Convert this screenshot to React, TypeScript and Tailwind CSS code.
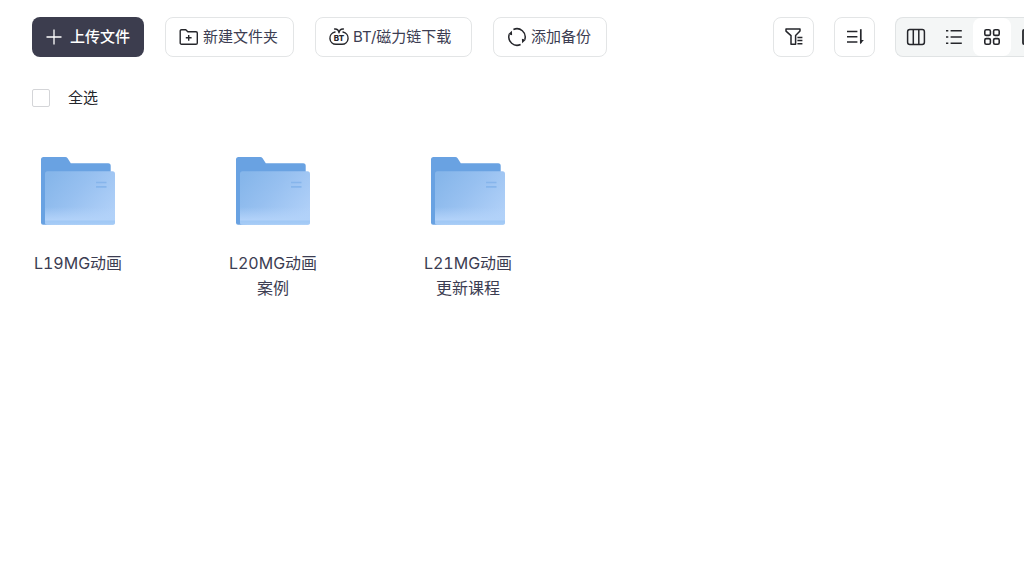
import React from 'react';

const folders = [
  { id: 'l19', name: 'L19MG动画' },
  { id: 'l20', name: 'L20MG动画案例' },
  { id: 'l21', name: 'L21MG动画更新课程' }
];

const PlusIcon = () => (
  <svg width="16" height="16" viewBox="0 0 16 16" fill="none" stroke="currentColor" strokeWidth="1.3" aria-hidden="true">
    <path d="M8 0.5v15M0.5 8h15" />
  </svg>
);

const NewFolderIcon = () => (
  <svg width="20" height="20" viewBox="0 0 20 20" fill="none" stroke="#25262b" strokeWidth="1.4" strokeLinejoin="round" aria-hidden="true">
    <path d="M1.2 4a1.3 1.3 0 0 1 1.3-1.3h4.3l2 2.1h8.2a1.3 1.3 0 0 1 1.3 1.3v9.8a1.3 1.3 0 0 1-1.3 1.3H2.5a1.3 1.3 0 0 1-1.3-1.3z" />
    <path d="M9.7 7.9v5.8M6.8 10.8h5.8" />
  </svg>
);

const BtIcon = () => (
  <svg width="20" height="20" viewBox="0 0 20 20" fill="none" stroke="#25262b" strokeWidth="1.4" strokeLinecap="round" strokeLinejoin="round" aria-hidden="true">
    <path d="M6 5A6.2 6.2 0 0 0 7 17.3h6A6.2 6.2 0 0 0 14 5" />
    <path d="M5.6 2c2.4-.2 3.9.8 4.4 3.7.5-2.9 2-3.9 4.4-3.7" />
    <text x="10" y="14" textAnchor="middle" fontFamily="Inter, sans-serif" fontSize="8" fontWeight="800" fill="#25262b" stroke="none">BT</text>
  </svg>
);

const BackupIcon = () => (
  <svg width="20" height="20" viewBox="0 0 20 20" fill="none" stroke="#25262b" strokeWidth="1.5" aria-hidden="true">
    <path d="M6.4 2.5a8.3 8.3 0 0 1 11.4 10" />
    <path d="M13.6 17.5a8.3 8.3 0 0 1-11.4-10" />
    <path d="M4.9 3.7l.2 4.5-3.9-.9z" fill="#25262b" stroke="none" />
    <path d="M15.1 16.3l-.2-4.5 3.9.9z" fill="#25262b" stroke="none" />
  </svg>
);

const FilterIcon = () => (
  <svg width="20" height="20" viewBox="0 0 20 20" fill="none" stroke="#25262b" strokeWidth="1.5" strokeLinejoin="round" aria-hidden="true">
    <path d="M2 2.1h14v2l-4.4 4.5v8.7H7V8.6L2 4.1z" />
    <path d="M13.4 10.4h5M13.4 13.6h5M13.4 16.8h5" />
  </svg>
);

const SortIcon = () => (
  <svg width="20" height="20" viewBox="0 0 20 20" fill="none" stroke="#25262b" strokeWidth="1.5" aria-hidden="true">
    <path d="M2 4.6h10.4M2 9.8h10.4M2 15h10.4" />
    <path d="M15.8 2.2v14" strokeWidth="1.7" />
    <path d="M15 17.2v-4.1h3.9z" fill="#25262b" stroke="none" />
  </svg>
);

const ColumnsIcon = () => (
  <svg width="20" height="20" viewBox="0 0 20 20" fill="none" stroke="#25262b" strokeWidth="1.5" aria-hidden="true">
    <rect x="1.6" y="2.6" width="16.8" height="14.8" rx="2.2" />
    <path d="M7.3 2.5v15M12.8 2.5v15" />
  </svg>
);

const ListIcon = () => (
  <svg width="20" height="20" viewBox="0 0 20 20" fill="none" stroke="#25262b" strokeWidth="1.5" aria-hidden="true">
    <path d="M6.6 3.8h11.2M6.6 10h11.2M6.6 16.2h11.2" />
    <path d="M2 3.8h2.3M2 10h2.3M2 16.2h2.3" />
  </svg>
);

const GridIcon = () => (
  <svg width="20" height="20" viewBox="0 0 20 20" fill="none" stroke="#25262b" strokeWidth="1.6" aria-hidden="true">
    <rect x="2.8" y="2.8" width="5.6" height="5.6" rx="1.5" />
    <rect x="11.6" y="2.8" width="5.6" height="5.6" rx="1.5" />
    <rect x="2.8" y="11.6" width="5.6" height="5.6" rx="1.5" />
    <rect x="11.6" y="11.6" width="5.6" height="5.6" rx="1.5" />
  </svg>
);

const GalleryIcon = () => (
  <svg width="20" height="20" viewBox="0 0 20 20" fill="none" stroke="#25262b" strokeWidth="1.8" aria-hidden="true">
    <rect x="3" y="3" width="14" height="14" rx="1" />
  </svg>
);

const FolderArt: React.FC<{ id: string }> = ({ id }) => (
  <svg width="74" height="68" viewBox="0 0 74 68" fill="none" aria-hidden="true">
    <defs>
      <linearGradient id={`front-${id}`} x1="10" y1="16" x2="66" y2="62" gradientUnits="userSpaceOnUse">
        <stop offset="0" stopColor="#86b6ea" />
        <stop offset="0.45" stopColor="#97c0f0" />
        <stop offset="1" stopColor="#b0d0f8" />
      </linearGradient>
      <linearGradient id={`base-${id}`} x1="0" y1="50" x2="0" y2="68" gradientUnits="userSpaceOnUse">
        <stop offset="0" stopColor="#b2d2f9" stopOpacity="0" />
        <stop offset="0.72" stopColor="#b2d2f9" />
        <stop offset="0.78" stopColor="#a0c8f5" />
        <stop offset="1" stopColor="#a8cdf7" />
      </linearGradient>
    </defs>
    <path d="M0 2.5A2.5 2.5 0 0 1 2.5 0h21.7a3 3 0 0 1 2.4 1.2L29.8 6.2h37.4a2.5 2.5 0 0 1 2.5 2.5V60L5 67.8H2A2 2 0 0 1 0 65.8z" fill="#69a2e2" />
    <rect x="4" y="14.3" width="70" height="53.5" rx="2.5" fill={`url(#front-${id})`} />
    <path d="M4 50h70v15.3a2.5 2.5 0 0 1-2.5 2.5H6.5A2.5 2.5 0 0 1 4 65.3z" fill={`url(#base-${id})`} />
    <path d="M55 25.5h10.5M55 29.8h10.5" stroke="#86b5eb" strokeWidth="1.7" />
  </svg>
);

const buttonBase = 'flex h-10 shrink-0 items-center whitespace-nowrap rounded-lg text-[15px] leading-5';
const outlined = 'border border-[#e3e5e6] bg-white text-[#3c3d52]';

const App: React.FC = () => {
  const views = [
    { label: '分栏', icon: <ColumnsIcon />, active: false },
    { label: '列表', icon: <ListIcon />, active: false },
    { label: '网格', icon: <GridIcon />, active: true },
    { label: '图库', icon: <GalleryIcon />, active: false }
  ];

  return (
    <main className="min-h-screen bg-white pt-[17px] font-[Inter,'Noto_Sans_CJK_SC',sans-serif]">
      <header className="flex justify-between overflow-hidden pl-8">
        <div className="flex gap-[21px]">
          <button type="button" className={`${buttonBase} w-28 justify-center gap-2 bg-[#3c3d4e] font-medium text-white`}>
            <PlusIcon />
            上传文件
          </button>
          <button type="button" className={`${buttonBase} ${outlined} w-[129px] gap-1 pl-[13px]`}>
            <NewFolderIcon />
            新建文件夹
          </button>
          <button type="button" className={`${buttonBase} ${outlined} w-[157px] gap-1 pl-[13px]`}>
            <BtIcon />
            <span>BT/磁力链下载</span>
          </button>
          <button type="button" className={`${buttonBase} ${outlined} w-[114px] gap-1 pl-[13px]`}>
            <BackupIcon />
            添加备份
          </button>
        </div>

        <div className="flex gap-5">
          <button type="button" aria-label="筛选" className={`${buttonBase} ${outlined} w-[41px] justify-center`}>
            <FilterIcon />
          </button>
          <button type="button" aria-label="排序" className={`${buttonBase} ${outlined} w-[41px] justify-center`}>
            <SortIcon />
          </button>
          <div className="flex h-10 w-[129px] overflow-hidden rounded-l-lg border border-r-0 border-[#e0e3e4] bg-[#f4f6f6] pl-px">
            {views.map((view) => (
              <button
                key={view.label}
                type="button"
                aria-label={view.label}
                aria-pressed={view.active}
                className={`flex w-[38px] shrink-0 items-center justify-center rounded-lg ${view.active ? 'bg-white' : ''}`}
              >
                {view.icon}
              </button>
            ))}
          </div>
        </div>
      </header>

      <label className="mx-8 mt-[31px] flex w-fit items-center gap-[18px] text-[15px] leading-5 text-[#25262b]">
        <input type="checkbox" className="size-[18px] appearance-none rounded-xs border border-[#d4d5d8] bg-white checked:bg-[#3c3d4e]" />
        全选
      </label>

      <section className="mt-[49px] flex flex-wrap gap-x-[99px] gap-y-8 px-[30px]">
        {folders.map((folder) => (
          <a key={folder.id} href={`#${folder.id}`} className="flex w-24 flex-col items-center">
            <FolderArt id={folder.id} />
            <span className="mt-[26px] text-center text-base leading-[25px] tabular-nums text-[#3c3d52]">{folder.name}</span>
          </a>
        ))}
      </section>
    </main>
  );
};

export default App;
